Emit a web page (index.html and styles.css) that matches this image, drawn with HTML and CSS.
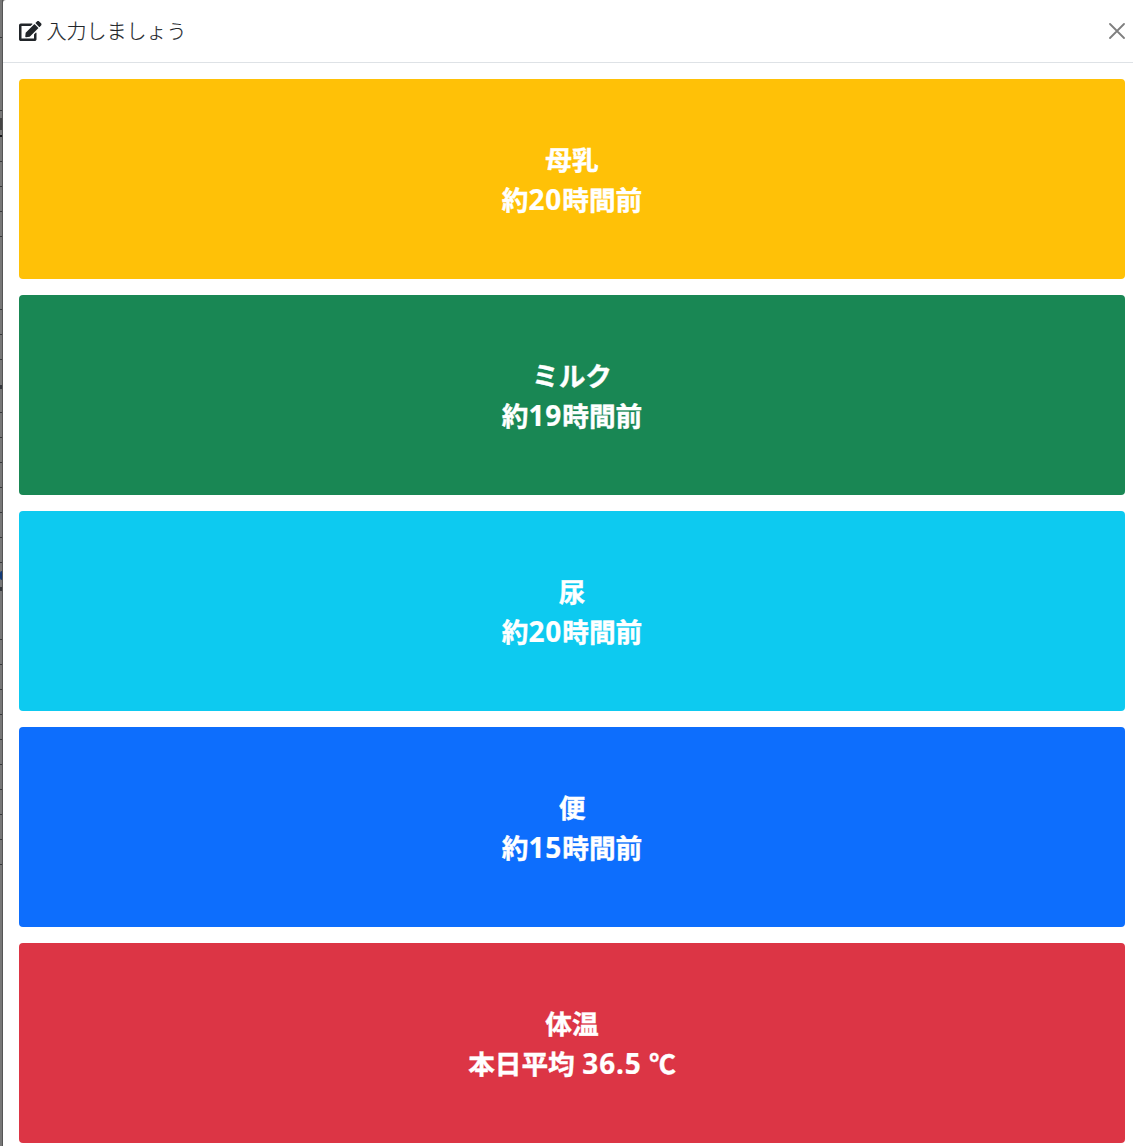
FILE: index.html
```html
<!DOCTYPE html>
<html lang="ja">
<head>
<meta charset="utf-8">
<title>入力しましょう</title>
<link rel="stylesheet" href="styles.css">
</head>
<body>
<div class="app">
  <div class="backdrop">
    <div class="row tall-first"></div>
    <div class="row tall"></div>
    <div class="row heading"><span class="mark"></span></div>
    <div class="row"></div><div class="row"></div><div class="row"></div><div class="row"></div>
    <div class="row tall"></div>
    <div class="row"></div><div class="row"></div>
    <div class="row band"></div>
    <div class="row"></div><div class="row"></div><div class="row"></div><div class="row"></div><div class="row"></div><div class="row"></div><div class="row"></div>
    <div class="row band second"><span class="dot"></span></div>
    <div class="row last-group"></div>
    <div class="row"></div><div class="row"></div><div class="row"></div><div class="row"></div><div class="row"></div><div class="row"></div><div class="row"></div><div class="row"></div><div class="row"></div>
  </div>
  <main class="modal">
    <header class="modal-header">
      <h1 class="title">
        <svg class="edit" viewBox="0 0 576 512" aria-hidden="true"><path fill="currentColor" d="M402.600 83.200l90.200 90.200c3.800 3.800 3.800 10 0 13.800L274.400 405.600l-92.800 10.300c-12.400 1.400-22.900-9.100-21.500-21.500l10.300-92.800L388.800 83.200c3.800-3.800 10-3.800 13.800 0zm162-22.900l-48.800-48.800c-15.200-15.200-39.900-15.200-55.200 0l-35.400 35.400c-3.800 3.800-3.800 10 0 13.800l90.200 90.200c3.800 3.800 10 3.800 13.800 0l35.400-35.400c15.200-15.300 15.200-40 0-55.200zM384 346.200V448H64V128h229.800c3.200 0 6.200-1.300 8.500-3.500l40-40c7.600-7.600 2.200-20.500-8.500-20.500H48C21.500 64 0 85.500 0 112v352c0 26.500 21.500 48 48 48h352c26.500 0 48-21.500 48-48V306.200c0-10.700-12.900-16-20.500-8.500l-40 40c-2.200 2.300-3.500 5.300-3.500 8.500z"/></svg>
        <span>入力しましょう</span>
      </h1>
      <svg class="close" viewBox="0 0 16 16" aria-label="閉じる"><path d="M1 1L15 15M15 1L1 15" fill="none" stroke="currentColor" stroke-width="1.8" stroke-linecap="round"/></svg>
    </header>
    <div class="modal-body">
      <div class="card yellow"><span>母乳</span><span>約<b>20</b>時間前</span></div>
      <div class="card green"><span>ミルク</span><span>約<b>19</b>時間前</span></div>
      <div class="card cyan"><span>尿</span><span>約<b>20</b>時間前</span></div>
      <div class="card blue"><span>便</span><span>約<b>15</b>時間前</span></div>
      <div class="card red"><span>体温</span><span>本日平均 <b>36.5</b> ℃</span></div>
    </div>
  </main>
</div>
</body>
</html>
```
FILE: styles.css
```css
* { box-sizing: border-box; }
body {
  margin: 0;
  background: #777;
  color: #212529;
  font-family: "Noto Sans CJK JP", sans-serif;
  overflow: hidden;
}
.app { display: flex; height: 1146px; }
.backdrop {
  width: 3px;
  flex: none;
  background: #777;
  border-right: 1px solid #555;
  overflow: hidden;
}
.row { height: 25px; border-bottom: 1px solid #38393b; }
.tall-first { height: 38px; }
.tall { height: 73px; }
.heading { height: 26px; border-bottom: 2px solid #151619; padding-top: 7px; }
.mark { display: block; height: 12px; background: #444; }
.band { height: 29px; border-bottom: 4px solid #34373c; }
.band.second { height: 28px; padding-top: 8px; }
.row.band + .row { height: 24px; }
.row.band + .row.last-group { height: 49px; }
.dot { display: block; height: 9px; background: #123a78; border-radius: 4px 0 0 4px; }
.modal { flex: 1; background: #fff; border-top-left-radius: 3px; }
.modal-header {
  display: flex;
  align-items: center;
  justify-content: space-between;
  height: 63px;
  padding: 0 8px 0 16px;
  border-bottom: 1px solid #dee2e6;
}
.title {
  display: flex;
  align-items: center;
  gap: 5px;
  margin: 0;
  font-size: 20px;
  font-weight: 300;
  line-height: 30px;
}
.title span { -webkit-text-stroke: 0.15px currentColor; }
.edit { width: 22.5px; height: 20px; }
.close { width: 16px; height: 16px; color: #7f7f7f; }
.modal-body {
  display: flex;
  flex-direction: column;
  gap: 16px;
  padding: 16px 8px 0 16px;
}
.card {
  display: flex;
  flex-direction: column;
  align-items: center;
  justify-content: center;
  height: 200px;
  padding-bottom: 1px;
  border-radius: 4px;
  color: #fff;
  font-size: 26.67px;
  font-weight: 700;
  line-height: 40px;
  -webkit-text-stroke: 0.4px #fff;
}
.card b {
  font-family: "Noto Sans", sans-serif;
  font-size: 28px;
  font-weight: 700;
  line-height: 1;
  letter-spacing: 0.9px;
  -webkit-text-stroke: 0.2px #fff;
}
.yellow { background: #ffc107; }
.green { background: #198754; }
.cyan { background: #0dcaf0; }
.blue { background: #0d6efd; }
.red { background: #dc3545; word-spacing: 1.4px; }
```
